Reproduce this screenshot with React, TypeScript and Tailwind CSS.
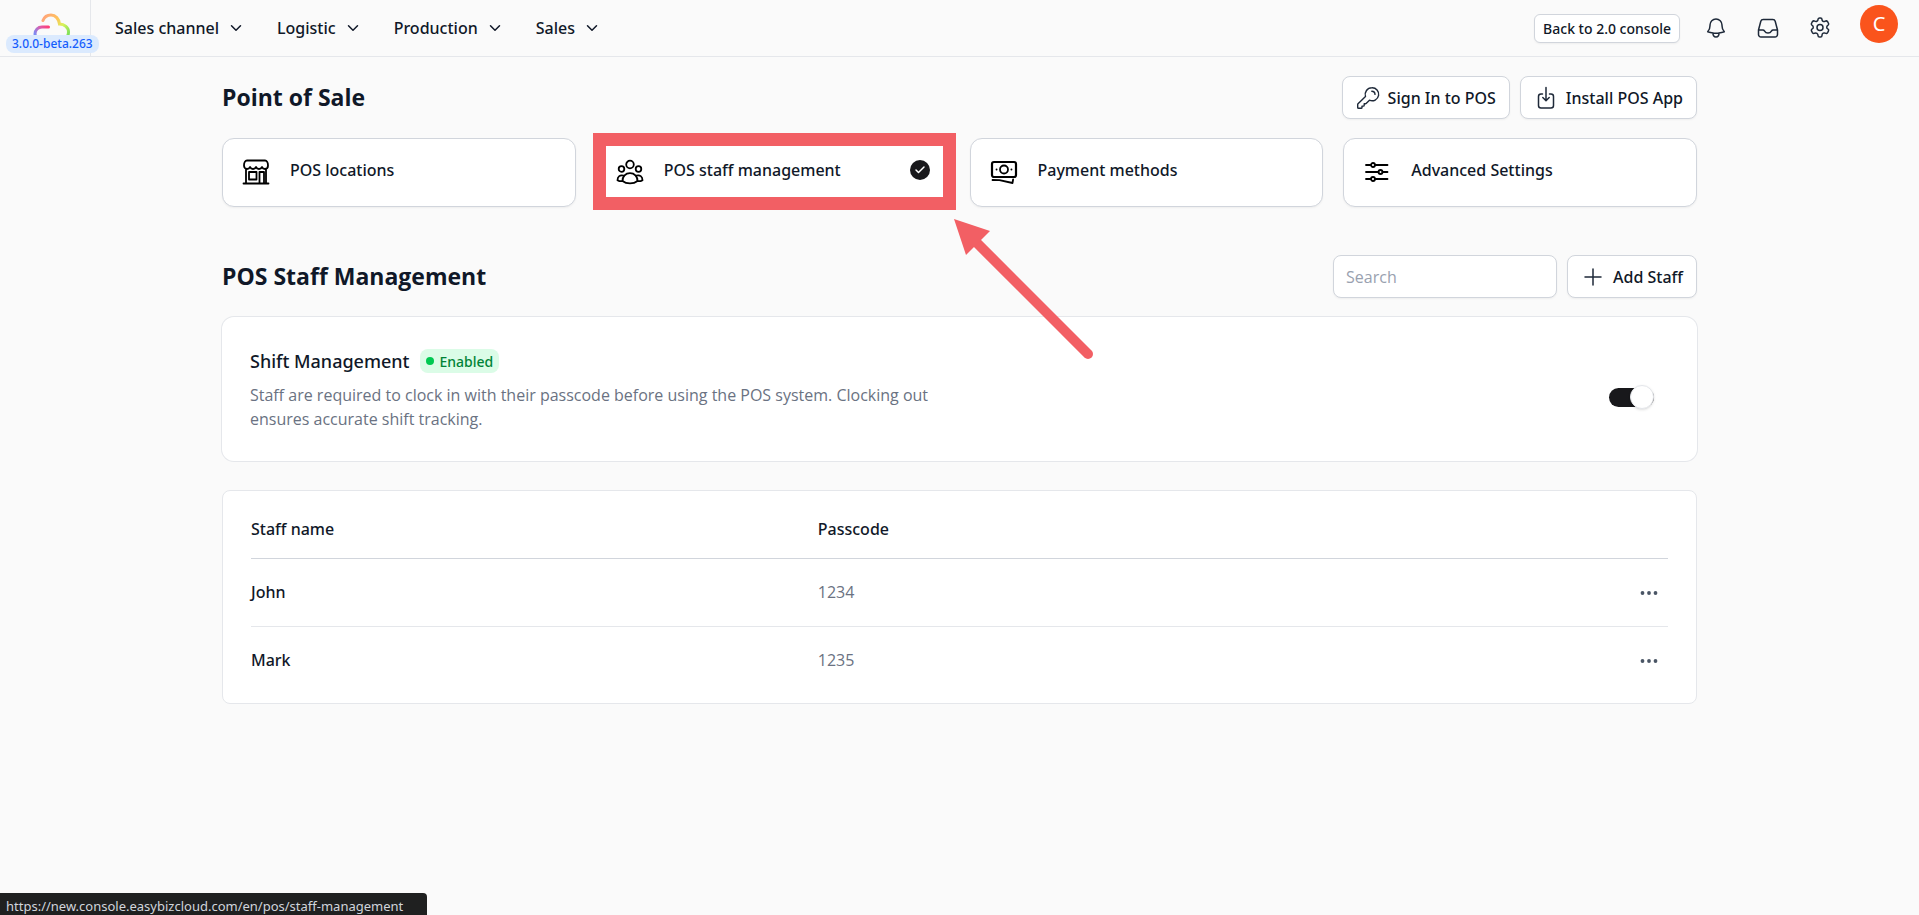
import type { InputHTMLAttributes, ReactNode, SVGProps } from 'react'
import { Check, ChevronDown } from 'lucide-react'
import { HiOutlineBell } from 'react-icons/hi2'

const NAV_ITEMS = ['Sales channel', 'Logistic', 'Production', 'Sales']

const STAFF = [
  { name: 'John', passcode: '1234' },
  { name: 'Mark', passcode: '1235' },
]

function Icon({ children, ...props }: SVGProps<SVGSVGElement>) {
  return (
    <svg
      viewBox="0 0 24 24"
      fill="none"
      stroke="currentColor"
      strokeWidth="1.5"
      strokeLinecap="round"
      strokeLinejoin="round"
      aria-hidden="true"
      {...props}
    >
      {children}
    </svg>
  )
}

function CloudLogo() {
  return (
    <svg width="38" height="28" viewBox="0 0 38 28" fill="none" aria-hidden="true">
      <defs>
        <linearGradient id="cloud-top" x1="8" y1="4" x2="36" y2="22" gradientUnits="userSpaceOnUse">
          <stop offset="0" stopColor="#ff9f80" />
          <stop offset="0.45" stopColor="#ffc35c" />
          <stop offset="0.7" stopColor="#d8f35a" />
          <stop offset="1" stopColor="#7be05a" />
        </linearGradient>
        <linearGradient id="cloud-left" x1="16" y1="16" x2="3" y2="24" gradientUnits="userSpaceOnUse">
          <stop offset="0" stopColor="#ff3f78" />
          <stop offset="0.5" stopColor="#d95fae" />
          <stop offset="1" stopColor="#7c8cf5" />
        </linearGradient>
      </defs>
      <path d="M10 8.500C11.500 4.500 15 3 18 3c4.500 0 8 4 8.500 9 5 0 9 3.500 9 8 0 3-1.500 6-5 7" stroke="url(#cloud-top)" strokeWidth="3" strokeLinecap="round" />
      <path d="M15.500 15H9c-4 0-7 3-7 7 0 2 1 4 3 5" stroke="url(#cloud-left)" strokeWidth="3" strokeLinecap="round" />
    </svg>
  )
}

function InboxIcon() {
  return (
    <Icon className="size-6">
      <path d="M2.500 14h4.300c.8 0 1.400.4 1.800 1.100.7 1.200 1.900 1.900 3.400 1.900s2.700-.7 3.400-1.900c.4-.7 1-1.100 1.800-1.100h4.300M2.500 14v4.500A2.500 2.500 0 0 0 5 21h14a2.500 2.500 0 0 0 2.500-2.500V14M2.500 14l2.300-8.700A2.500 2.500 0 0 1 7.200 3.500h9.600a2.500 2.500 0 0 1 2.400 1.800L21.500 14" />
    </Icon>
  )
}

function GearIcon() {
  return (
    <Icon className="size-6">
      <path d="M10 3.600c0-.9.700-1.600 1.600-1.600h.8c.9 0 1.600.7 1.600 1.600 0 1.500 1.600 2.500 3 1.700l.3-.2c.8-.4 1.800-.1 2.300.6l.8 1.400c.5.8.2 1.800-.6 2.300-1.400.8-1.400 2.700 0 3.500.8.500 1.100 1.500.6 2.300l-.8 1.400c-.5.8-1.500 1-2.300.6-1.400-.8-3.100.2-3.300 1.800v.4c0 .9-.7 1.600-1.600 1.600h-.8c-.9 0-1.600-.7-1.600-1.600 0-1.700-1.800-2.900-3.300-2.200-.8.400-1.800.2-2.300-.6l-.8-1.400c-.5-.8-.2-1.800.6-2.300 1.400-.8 1.400-2.700 0-3.500-.8-.5-1.100-1.500-.6-2.300l.8-1.400c.5-.7 1.500-1 2.300-.6C8.200 5.900 10 5.200 10 3.600Z" />
      <circle cx="12" cy="11.500" r="3" />
    </Icon>
  )
}

function KeyIcon() {
  return (
    <Icon className="size-6" strokeWidth="1.4">
      <path d="M15.800 1.800a6.600 6.600 0 0 0-6.300 8.600L2 17.800a1 1 0 0 0-.3.700v2.900c0 .5.400.9.900.9h2.500c.5 0 .9-.4.900-.9v-1.300h1.300c.5 0 .9-.4.900-.9v-1.400h1.300c.2 0 .5-.1.600-.3l3.400-3.300a6.500 6.500 0 1 0 2.300-12.400Z" />
      <path d="M15.800 5.200a3.200 3.200 0 0 1 3.200 3.200" />
    </Icon>
  )
}

function InstallIcon() {
  return (
    <Icon className="size-6">
      <path d="M8.500 8H7a2.500 2.500 0 0 0-2.500 2.500v9A2.500 2.500 0 0 0 7 22h10a2.500 2.500 0 0 0 2.500-2.500v-9A2.500 2.500 0 0 0 17 8h-1.500M12 1.500v13M8.800 11.500l3.200 3.200 3.200-3.200" />
    </Icon>
  )
}

function StoreIcon() {
  return (
    <Icon className="size-7" viewBox="0 0 28 28" strokeWidth="1.800">
      <path d="M5 2.500h18c1.800 0 3 2.500 3 5 0 2-1.200 3.500-3 3.500s-2.600-1-3-2c-.5 1-1.500 2-3 2s-2.500-1-3-2c-.5 1-1.500 2-3 2s-2.500-1-3-2c-.4 1-1.200 2-3 2s-3-1.500-3-3.500c0-2.500 1.200-5 3-5ZM4 11v14M24 11v14M1.500 25.500h25M7 14h7.500v7.500H7zM17.500 25V14H22v11" />
    </Icon>
  )
}

function StaffIcon() {
  return (
    <Icon className="size-7" viewBox="0 0 28 28" strokeWidth="1.8">
      <circle cx="14" cy="6.500" r="3.800" />
      <circle cx="5.500" cy="11" r="2.800" />
      <circle cx="22.500" cy="11" r="2.800" />
      <path d="M6.500 23c0-4.500 3-7.800 7.500-7.800s7.500 3.300 7.500 7.800c-2 1.600-4.600 2.400-7.500 2.400S8.500 24.600 6.500 23Z" />
      <path d="M7.500 17.600c-3.400-1-6 .9-6 4.600 1.200.8 2.800 1.100 4.800 1M20.500 17.600c3.400-1 6 .9 6 4.600-1.200.8-2.800 1.100-4.800 1" />
    </Icon>
  )
}

function CashIcon() {
  return (
    <Icon className="size-7" viewBox="0 0 28 28" strokeWidth="1.8">
      <rect x="2" y="4" width="24" height="15" rx="2" strokeWidth="2.200" />
      <circle cx="14" cy="11.500" r="4" />
      <path d="M6.500 11.500h.1M21.400 11.500h.1M2.500 22l7 .2L22.500 25l.6-3.500" />
    </Icon>
  )
}

function SlidersIcon() {
  return (
    <Icon className="size-7" viewBox="0 0 28 28" strokeWidth="1.800">
      <path d="M3 7h5M12 7h12.500M3 14h12.500M19.500 14h5M3 21h5M12 21h12.500" />
      <circle cx="10" cy="7" r="2" />
      <circle cx="17.500" cy="14" r="2" />
      <circle cx="10" cy="21" r="2" />
    </Icon>
  )
}

const TABS = [
  { label: 'POS locations', href: '#locations', icon: <StoreIcon /> },
  { label: 'POS staff management', href: '#staff-management', icon: <StaffIcon />, active: true },
  { label: 'Payment methods', href: '#payment-methods', icon: <CashIcon /> },
  { label: 'Advanced Settings', href: '#advanced-settings', icon: <SlidersIcon /> },
]

function Button({ icon, children }: { icon: ReactNode; children: ReactNode }) {
  return (
    <button
      type="button"
      className="flex h-[43px] items-center gap-2 rounded-lg border border-gray-300 bg-white px-[13px] font-['Noto_Sans',sans-serif] font-medium whitespace-nowrap text-gray-900 shadow-xs"
    >
      <span className="text-gray-800">{icon}</span>
      {children}
    </button>
  )
}

function Toggle(props: InputHTMLAttributes<HTMLInputElement>) {
  return (
    <label className="relative flex h-6 w-[45px] shrink-0 cursor-pointer items-center">
      <input type="checkbox" role="switch" className="peer sr-only" {...props} />
      <span className="h-[19px] w-full rounded-full bg-gray-300 peer-checked:bg-zinc-900" />
      <span className="absolute left-0 size-6 rounded-full border border-gray-200 bg-white shadow-sm peer-checked:right-0 peer-checked:left-auto" />
    </label>
  )
}

function Header() {
  return (
    <header className="flex h-[57px] border-b border-gray-200 font-['Noto_Sans',sans-serif]">
      <a href="#home" className="relative flex w-[91px] shrink-0 justify-center border-r border-gray-200 pt-3 pl-3.5">
        <CloudLogo />
        <span className="absolute top-[35px] left-1.5 rounded-lg bg-blue-100 px-1.5 text-[12px] leading-[18px] font-medium whitespace-nowrap text-blue-600">
          3.0.0-beta.263
        </span>
      </a>
      <nav className="flex items-center gap-8 pl-6">
        {NAV_ITEMS.map((item) => (
          <button key={item} type="button" className="flex items-center gap-2 font-medium text-gray-900">
            {item}
            <ChevronDown size={18} strokeWidth={2} />
          </button>
        ))}
      </nav>
      <div className="ml-auto flex items-center gap-6 pr-[21px] text-gray-800">
        <button type="button" className="h-[29px] rounded-md border border-gray-300 bg-white px-2 text-[14px] font-medium text-gray-900 shadow-xs">
          Back to 2.0 console
        </button>
        <div className="flex items-center gap-7">
          <button type="button" aria-label="Notifications">
            <HiOutlineBell size={24} />
          </button>
          <button type="button" aria-label="Inbox">
            <InboxIcon />
          </button>
          <button type="button" aria-label="Settings">
            <GearIcon />
          </button>
          <button type="button" aria-label="Account" className="mb-2 size-[38px] rounded-full bg-[#fa541c] text-[20px] text-white">
            C
          </button>
        </div>
      </div>
    </header>
  )
}

// Frame and arrow pointing at the selected tab
function Callout() {
  return (
    <>
      <span className="pointer-events-none absolute -top-[5px] -right-[6px] -bottom-[3px] -left-[3px] border-[13px] border-[#f25f64]" />
      <svg
        width="144"
        height="144"
        viewBox="0 0 144 144"
        className="pointer-events-none absolute top-full left-full mt-3 ml-1"
        aria-hidden="true"
      >
        <path d="M22 23 134 135" stroke="#f25f64" strokeWidth="10" strokeLinecap="round" />
        <path d="M0 0 36 12 12 36Z" fill="#f25f64" />
      </svg>
    </>
  )
}

export default function App() {
  return (
    <div className="min-h-screen bg-[#fafafa] font-['Open_Sans',sans-serif] text-[16px] text-gray-900">
      <Header />

      <main className="mx-auto max-w-[1475px] pt-[19px]">
        <div className="flex items-center justify-between">
          <h1 className="text-[23px] font-bold">Point of Sale</h1>
          <div className="flex gap-2.5">
            <Button icon={<KeyIcon />}>Sign In to POS</Button>
            <Button icon={<InstallIcon />}>Install POS App</Button>
          </div>
        </div>

        <nav className="mt-[19px] grid grid-cols-4 gap-5 font-['Noto_Sans',sans-serif]">
          {TABS.map((tab) => (
            <div key={tab.label} className="relative">
              <a
                href={tab.href}
                className="flex h-[69px] items-center gap-5 rounded-xl border border-gray-300 bg-white px-[19px] pb-1.5 font-medium shadow-xs"
              >
                <span className="pt-1 text-black">{tab.icon}</span>
                <span className="flex-1">{tab.label}</span>
                {tab.active && (
                  <span className="flex size-5 items-center justify-center rounded-full bg-zinc-900 text-white">
                    <Check size={12} strokeWidth={3} />
                  </span>
                )}
              </a>
              {tab.active && <Callout />}
            </div>
          ))}
        </nav>

        <div className="mt-12 flex items-center justify-between">
          <h2 className="text-[23px] font-bold">POS Staff Management</h2>
          <div className="flex gap-2.5">
            <input
              type="search"
              aria-label="Search staff"
              placeholder="Search"
              className="h-[43px] w-56 rounded-lg border border-gray-300 bg-white px-3 shadow-xs placeholder:text-gray-400"
            />
            <Button
              icon={
                <Icon className="size-6">
                  <path d="M12 4v16M4 12h16" />
                </Icon>
              }
            >
              Add Staff
            </Button>
          </div>
        </div>

        <section className="mt-[19px] flex h-[144px] items-center justify-between rounded-xl bg-white pr-[43px] pl-7 ring-1 ring-gray-200">
          <div className="w-[690px]">
            <div className="flex items-center gap-2.5 font-['Noto_Sans',sans-serif] font-medium">
              <h3 className="text-[18px]">Shift Management</h3>
              <span className="flex h-6 items-center gap-1.5 rounded-lg bg-green-100 px-1.5 text-[14px] text-green-700">
                <span className="size-2 rounded-full bg-green-500" />
                Enabled
              </span>
            </div>
            <p className="mt-2 leading-6 text-gray-500">
              Staff are required to clock in with their passcode before using the POS system. Clocking out ensures
              accurate shift tracking.
            </p>
          </div>
          <div className="pt-4">
            <Toggle aria-label="Shift Management" defaultChecked />
          </div>
        </section>

        <section className="mt-[29px] rounded-lg border border-gray-200 bg-white px-7 pt-2.5 pb-[9px]">
          <table className="w-full table-fixed text-left">
            <thead className="font-['Noto_Sans',sans-serif]">
              <tr className="h-[57px] border-b border-gray-300">
                <th className="w-2/5 font-medium">Staff name</th>
                <th className="w-2/5 font-medium">Passcode</th>
                <th aria-label="Actions" />
              </tr>
            </thead>
            <tbody className="divide-y divide-gray-200">
              {STAFF.map((staff) => (
                <tr key={staff.name} className="h-[68px]">
                  <td className="font-['Noto_Sans',sans-serif] font-medium">{staff.name}</td>
                  <td className="text-gray-500">{staff.passcode}</td>
                  <td className="pr-[7px] text-right">
                    <button type="button" aria-label={`Actions for ${staff.name}`} className="align-middle text-gray-600">
                      <svg width="24" height="24" viewBox="0 0 24 24" fill="currentColor" aria-hidden="true">
                        <circle cx="5.500" cy="12" r="1.900" />
                        <circle cx="12" cy="12" r="1.900" />
                        <circle cx="18.500" cy="12" r="1.900" />
                      </svg>
                    </button>
                  </td>
                </tr>
              ))}
            </tbody>
          </table>
        </section>
      </main>

      <div className="fixed bottom-0 left-0 rounded-tr bg-[#1f2020] pt-1 pr-6 pl-1.5 font-['Noto_Sans',sans-serif] text-[13px] leading-[18px] text-gray-300">
        https://new.console.easybizcloud.com/en/pos/staff-management
      </div>
    </div>
  )
}
